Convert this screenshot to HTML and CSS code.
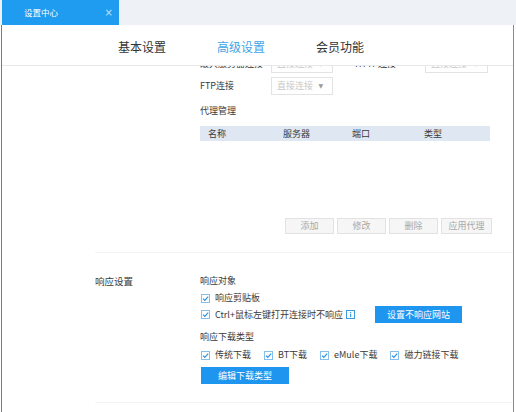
FILE: index.html
```html
<!DOCTYPE html>
<html lang="zh">
<head>
<meta charset="utf-8">
<title>设置中心</title>
<link rel="stylesheet" href="styles.css">
</head>
<body>
<div class="window">
  <div class="tabbar">
    <div class="tab"><span class="tab-title">设置中心</span><span class="tab-close">×</span></div>
  </div>
  <div class="frame">
    <nav class="nav">
      <span class="nav-item">基本设置</span>
      <span class="nav-item active">高级设置</span>
      <span class="nav-item">会员功能</span>
    </nav>
    <div class="content">
      <div class="inner">
        <section class="section proxy">
          <div class="sec-label"></div>
          <div class="sec-body">
            <div class="form-row first">
              <span class="f-label">最大服务器连接</span>
              <span class="select"><span>直接连接</span><i class="arrow">▼</i></span>
              <span class="f-label second">HTTP连接</span>
              <span class="select wide"><span>直接连接</span><i class="arrow">▼</i></span>
            </div>
            <div class="form-row">
              <span class="f-label">FTP连接</span>
              <span class="select"><span>直接连接</span><i class="arrow">▼</i></span>
            </div>
            <div class="title proxy-title">代理管理</div>
            <div class="table">
              <div class="thead">
                <span class="c1">名称</span>
                <span class="c2">服务器</span>
                <span class="c3">端口</span>
                <span class="c4">类型</span>
              </div>
              <div class="tbody"></div>
            </div>
            <div class="btn-row">
              <span class="gbtn">添加</span>
              <span class="gbtn">修改</span>
              <span class="gbtn">删除</span>
              <span class="gbtn">应用代理</span>
            </div>
          </div>
        </section>
        <section class="section response">
          <div class="sec-label">响应设置</div>
          <div class="sec-body">
            <div class="title">响应对象</div>
            <div class="cb-row r1">
              <span class="cb"><svg viewBox="0 0 9 9" width="9" height="9"><rect x="0.5" y="0.5" width="8" height="8" fill="#fff" stroke="#86bfe9"/><path d="M2 4.6 L3.8 6.3 L7.2 2.6" fill="none" stroke="#2e93e0" stroke-width="1.2"/></svg></span>
              <span>响应剪贴板</span>
            </div>
            <div class="cb-row r2">
              <span class="cb"><svg viewBox="0 0 9 9" width="9" height="9"><rect x="0.5" y="0.5" width="8" height="8" fill="#fff" stroke="#86bfe9"/><path d="M2 4.6 L3.8 6.3 L7.2 2.6" fill="none" stroke="#2e93e0" stroke-width="1.2"/></svg></span>
              <span>Ctrl+鼠标左键打开连接时不响应</span>
              <span class="info"><svg viewBox="0 0 9 9" width="9" height="9"><rect x="0.5" y="0.5" width="8" height="8" fill="#fff" stroke="#3d9be0"/><rect x="4" y="2" width="1.2" height="1.2" fill="#3d9be0"/><rect x="4" y="3.8" width="1.2" height="3.4" fill="#3d9be0"/></svg></span>
              <span class="bbtn nores">设置不响应网站</span>
            </div>
            <div class="title dl-title">响应下载类型</div>
            <div class="cb-row dl">
              <span class="cb"><svg viewBox="0 0 9 9" width="9" height="9"><rect x="0.5" y="0.5" width="8" height="8" fill="#fff" stroke="#86bfe9"/><path d="M2 4.6 L3.8 6.3 L7.2 2.6" fill="none" stroke="#2e93e0" stroke-width="1.2"/></svg></span>
              <span class="dl-text">传统下载</span>
              <span class="cb"><svg viewBox="0 0 9 9" width="9" height="9"><rect x="0.5" y="0.5" width="8" height="8" fill="#fff" stroke="#86bfe9"/><path d="M2 4.6 L3.8 6.3 L7.2 2.6" fill="none" stroke="#2e93e0" stroke-width="1.2"/></svg></span>
              <span class="dl-text">BT下载</span>
              <span class="cb"><svg viewBox="0 0 9 9" width="9" height="9"><rect x="0.5" y="0.5" width="8" height="8" fill="#fff" stroke="#86bfe9"/><path d="M2 4.6 L3.8 6.3 L7.2 2.6" fill="none" stroke="#2e93e0" stroke-width="1.2"/></svg></span>
              <span class="dl-text">eMule下载</span>
              <span class="cb"><svg viewBox="0 0 9 9" width="9" height="9"><rect x="0.5" y="0.5" width="8" height="8" fill="#fff" stroke="#86bfe9"/><path d="M2 4.6 L3.8 6.3 L7.2 2.6" fill="none" stroke="#2e93e0" stroke-width="1.2"/></svg></span>
              <span class="dl-text">磁力链接下载</span>
            </div>
            <div class="btn-line"><span class="bbtn edit">编辑下载类型</span></div>
          </div>
        </section>
      </div>
    </div>
  </div>
</div>
</body>
</html>
```
FILE: styles.css
```css
html, body {
  margin: 0;
  padding: 0;
}
body {
  width: 516px;
  height: 412px;
  overflow: hidden;
  background: #ffffff;
  font-family: "Noto Sans CJK SC", "Microsoft YaHei", sans-serif;
  color: #333333;
}
.window {
  height: 412px;
  display: flex;
  flex-direction: column;
}
.tabbar {
  height: 25px;
  flex: none;
  background: #eef1f5;
  padding-left: 2px;
  display: flex;
}
.tab {
  width: 117px;
  background: #1f9cf0;
  color: #ffffff;
  display: flex;
  align-items: center;
  justify-content: space-between;
  padding: 0 6px 0 22px;
  box-sizing: border-box;
}
.tab-title {
  font-size: 8.5px;
  line-height: 1;
}
.tab-close {
  font-size: 10px;
  line-height: 1;
  color: #bfe2fb;
  font-family: "DejaVu Sans", sans-serif;
}
.frame {
  flex: 1;
  min-height: 0;
  margin: 0 2px 0 1px;
  border-left: 1px solid #7a7a7a;
  border-right: 1px solid #8a8a8a;
  display: flex;
  flex-direction: column;
}
.nav {
  height: 41px;
  flex: none;
  box-sizing: border-box;
  padding: 3px 0 0 116px;
  border-bottom: 1px solid #e8e8e8;
  display: flex;
  align-items: center;
  gap: 51px;
  font-size: 12px;
}
.nav-item {
  color: #333333;
  line-height: 1;
}
.nav-item.active {
  color: #3fa4e6;
}
.content {
  flex: 1;
  min-height: 0;
  overflow: hidden;
}
.inner {
  margin-top: -11px;
}
.section {
  margin-left: 93px;
  display: flex;
  border-bottom: 1px solid #f4f4f4;
}
.sec-label {
  width: 105px;
  flex: none;
  font-size: 9.5px;
  line-height: 12px;
  color: #3a3a3a;
}
.sec-body {
  width: 290px;
  font-size: 9px;
  line-height: 12px;
  color: #3a3a3a;
}
.proxy {
  padding-bottom: 18px;
}
.form-row {
  height: 18px;
  display: flex;
  align-items: center;
}
.form-row.first {
  margin-bottom: 4px;
}
.f-label {
  width: 71px;
  flex: none;
}
.f-label.second {
  width: 70px;
  margin-left: 22px;
}
.select {
  width: 62px;
  height: 18px;
  box-sizing: border-box;
  border: 1px solid #e3e3e3;
  display: flex;
  align-items: center;
  justify-content: space-between;
  padding: 0 9px 0 5px;
  color: #c9c9c9;
  flex: none;
}
.select.wide {
  width: 63px;
}
.arrow {
  font-style: normal;
  font-size: 6px;
  color: #9a9a9a;
  font-family: "DejaVu Sans", sans-serif;
}
.proxy-title {
  margin-top: 10px;
}
.table {
  margin-top: 9px;
}
.thead {
  height: 15px;
  background: #dfe7f2;
  display: flex;
  align-items: center;
}
.thead .c1 { width: 75px; padding-left: 8px; }
.thead .c2 { width: 69px; }
.thead .c3 { width: 72px; }
.thead .c4 { width: 60px; }
.tbody {
  height: 77px;
}
.btn-row {
  display: flex;
  justify-content: flex-end;
  gap: 3px;
  margin-right: -2px;
}
.gbtn {
  width: 49px;
  height: 16px;
  box-sizing: border-box;
  border: 1px solid #e2e2e2;
  background: #f6f6f6;
  color: #a9a9a9;
  display: flex;
  align-items: center;
  justify-content: center;
}
.gbtn:last-child {
  width: 51px;
}
.response {
  padding-top: 22px;
  padding-bottom: 18px;
}
.cb-row {
  display: flex;
  align-items: center;
}
.cb {
  width: 9px;
  height: 9px;
  margin: 0 5px 0 1px;
  display: flex;
  flex: none;
}
.cb-row.r1 {
  height: 16px;
  margin-top: 3px;
}
.cb-row.r2 {
  height: 17px;
}
.info {
  width: 9px;
  height: 9px;
  display: flex;
  margin-left: 3px;
}
.bbtn {
  background: #1e96ef;
  color: #ffffff;
  display: flex;
  align-items: center;
  justify-content: center;
  height: 17px;
}
.nores {
  width: 87px;
  margin-left: 20px;
}
.dl-title {
  margin-top: 8px;
}
.cb-row.dl {
  height: 16px;
  margin-top: 4px;
}
.dl-text {
  margin-right: 12px;
}
.btn-line {
  margin-top: 4px;
  display: flex;
}
.edit {
  width: 88px;
  margin-left: 1px;
}
```
